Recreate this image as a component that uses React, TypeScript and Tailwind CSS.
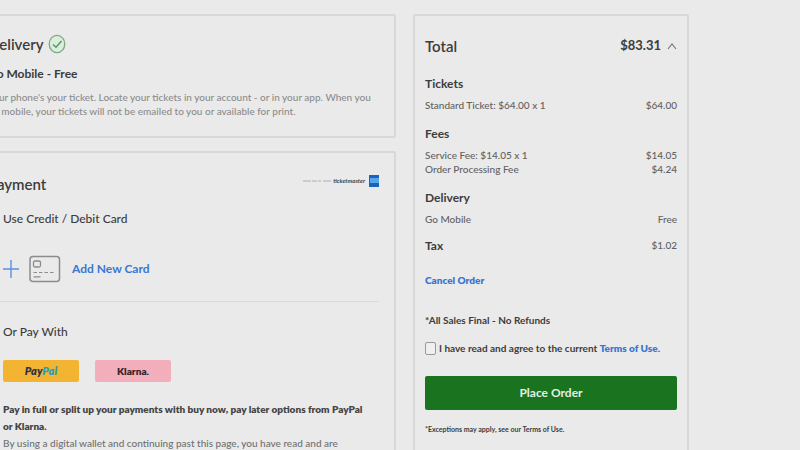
import React from 'react';

interface FeeRowProps {
  label: string;
  amount: string;
}

const FeeRow: React.FC<FeeRowProps> = ({ label, amount }) => (
  <div className="flex justify-between text-[10px] leading-[14px] font-medium text-[#626262]">
    <span>{label}</span>
    <span>{amount}</span>
  </div>
);

const DeliveryCard: React.FC = () => (
  <section className="rounded-xs border-2 border-[#d8d8d8] px-[15px] py-[18px]">
    <h2 className="flex items-center gap-1 text-[15px] leading-5 font-semibold text-[#3c3c3c]">
      Delivery
      <svg width="18" height="20" viewBox="0 0 18 20" fill="none" aria-hidden="true">
        <ellipse cx="9" cy="10" rx="7.8" ry="8.6" fill="#d9eedb" stroke="#7fa682" strokeWidth="1.3" />
        <path d="M5 10.5 8 13.3 13.5 7" stroke="#5f8f64" strokeWidth="1.4" />
      </svg>
    </h2>
    <h3 className="mt-3 text-xs leading-4 font-bold text-[#3c3c3c]">Go Mobile - Free</h3>
    <p className="mt-2 text-[10px] leading-[14px] font-medium whitespace-nowrap text-[#8c8c8c]">
      Your phone's your ticket. Locate your tickets in your account - or in your app. When you
      <br />
      go mobile, your tickets will not be emailed to you or available for print.
    </p>
  </section>
);

const PaymentCard: React.FC = () => (
  <section className="min-h-[340px] rounded-xs border-2 border-[#d8d8d8] px-[15px] pt-[21px]">
    <div className="flex items-center justify-between">
      <h2 className="text-[15px] leading-5 font-semibold text-[#3c3c3c]">Payment</h2>
      <div className="-mt-1.5 flex items-center gap-1">
        <svg width="30" height="4" viewBox="0 0 30 4" aria-hidden="true">
          <path d="M0 2h8M9 2h5M15 2h3M20 2h8" stroke="#c2c2c2" strokeWidth="1.4" />
        </svg>
        <span className="-ml-1 text-[6px] leading-2 font-bold text-[#444] italic">ticketmaster</span>
        <svg width="10" height="12" viewBox="0 0 10 12" aria-hidden="true">
          <path d="M0 0h10v12H0z" fill="#1766bd" />
          <path d="M1 3h9v5H1z" fill="#59a5ed" />
        </svg>
      </div>
    </div>

    <div className="pl-[15px]">
      <h3 className="mt-[17px] text-xs leading-4 font-medium text-[#3c3c3c]">Use Credit / Debit Card</h3>
      <button type="button" className="mt-7 flex h-7 items-center text-xs font-bold text-[#3a76d2]">
        <svg width="16" height="18" viewBox="0 0 16 18" aria-hidden="true">
          <path d="M8 0v18M0 9h16" stroke="#5a91df" strokeWidth="1.4" />
        </svg>
        <svg className="ml-2.5" width="32" height="28" viewBox="0 0 32 28" fill="none" stroke="#8c8c8c" aria-hidden="true">
          <rect x="1" y="1.5" width="29.5" height="25" rx="3" strokeWidth="1.5" />
          <rect x="4.5" y="6" width="7" height="6" rx="1.5" strokeWidth="1.3" />
          <path d="M4.5 17.5h3.5M10 17.5h3.5M15.5 17.5H19M21 17.5h3.5M4.5 21.8h7" strokeWidth="1.2" />
        </svg>
        <span className="ml-[11px]">Add New Card</span>
      </button>
    </div>

    <hr className="mt-[18px] border-[#dadada]" />

    <div className="pl-[15px]">
      <h3 className="mt-[22px] text-xs leading-4 font-medium text-[#3c3c3c]">Or Pay With</h3>
      <div className="mt-5 flex gap-4">
        <button type="button" className="h-[22px] w-[76px] rounded-xs bg-[#f3b431] text-[11px] font-extrabold italic">
          <span className="text-[#2d3547]">Pay</span>
          <span className="text-[#2b9fb0]">Pal</span>
        </button>
        <button type="button" className="h-[22px] w-[76px] rounded-xs bg-[#f3aebb] text-[10px] font-extrabold text-[#35252a]">
          Klarna.
        </button>
      </div>
      <p className="mt-[19px] text-[10px] leading-[17px] font-extrabold whitespace-nowrap text-[#444]">
        Pay in full or split up your payments with buy now, pay later options from PayPal
        <br />
        or Klarna.
      </p>
      <p className="text-[10px] leading-[17px] font-medium whitespace-nowrap text-[#707070]">
        By using a digital wallet and continuing past this page, you have read and are
      </p>
    </div>
  </section>
);

const OrderSummary: React.FC = () => (
  <aside className="min-h-[480px] rounded-xs border-2 border-[#d8d8d8] px-2.5 pt-4 text-[#3c3c3c]">
    <div className="flex h-7 items-center justify-between">
      <h2 className="text-[15px] font-semibold">Total</h2>
      <button type="button" className="flex items-center gap-1.5 text-[13px] font-bold">
        $83.31
        <svg width="10" height="7" viewBox="0 0 10 7" fill="none" aria-hidden="true">
          <path d="M1 6 5 1 9 6" stroke="#777" strokeWidth="1.2" />
        </svg>
      </button>
    </div>

    <h3 className="mt-4 mb-1.5 text-xs leading-4 font-bold">Tickets</h3>
    <FeeRow label="Standard Ticket: $64.00 x 1" amount="$64.00" />

    <h3 className="mt-3.5 mb-1.5 text-xs leading-4 font-bold">Fees</h3>
    <FeeRow label="Service Fee: $14.05 x 1" amount="$14.05" />
    <FeeRow label="Order Processing Fee" amount="$4.24" />

    <h3 className="mt-3.5 mb-1.5 text-xs leading-4 font-bold">Delivery</h3>
    <FeeRow label="Go Mobile" amount="Free" />

    <div className="mt-3 flex justify-between">
      <h3 className="text-xs leading-4 font-bold">Tax</h3>
      <span className="text-[10px] leading-[14px] font-medium text-[#626262]">$1.02</span>
    </div>

    <a href="#cancel" className="mt-[18px] block text-[10px] leading-4 font-extrabold text-[#3a76d2]">
      Cancel Order
    </a>

    <p className="mt-6 text-[10px] leading-4 font-bold">*All Sales Final - No Refunds</p>

    <div className="mt-3 flex items-center gap-[3px] text-[10px] leading-4 font-bold whitespace-nowrap">
      <input
        id="agree"
        type="checkbox"
        className="h-[13px] w-[11px] shrink-0 appearance-none rounded-xs border border-[#999] bg-[#efefef] checked:bg-[#1a741f]"
      />
      <label htmlFor="agree">
        I have read and agree to the current{' '}
        <a href="#terms" className="font-extrabold text-[#3a76d2]">Terms of Use.</a>
      </label>
    </div>

    <button type="button" className="mt-5 h-[34px] w-full rounded-xs bg-[#1a741f] text-xs font-bold text-[#e4efe4]">
      Place Order
    </button>
    <p className="mt-3 text-[7px] leading-[14px] font-bold">*Exceptions may apply, see our Terms of Use.</p>
  </aside>
);

const App: React.FC = () => (
  <div className="h-screen overflow-hidden bg-[#eaeaea] font-['Lato',sans-serif]">
    <main className="-ml-[29px] flex items-start gap-[17px] pt-3.5 pr-[111px]">
      <div className="flex min-w-0 flex-1 flex-col gap-[13px]">
        <DeliveryCard />
        <PaymentCard />
      </div>
      <div className="w-[276px] shrink-0">
        <OrderSummary />
      </div>
    </main>
  </div>
);

export default App;
